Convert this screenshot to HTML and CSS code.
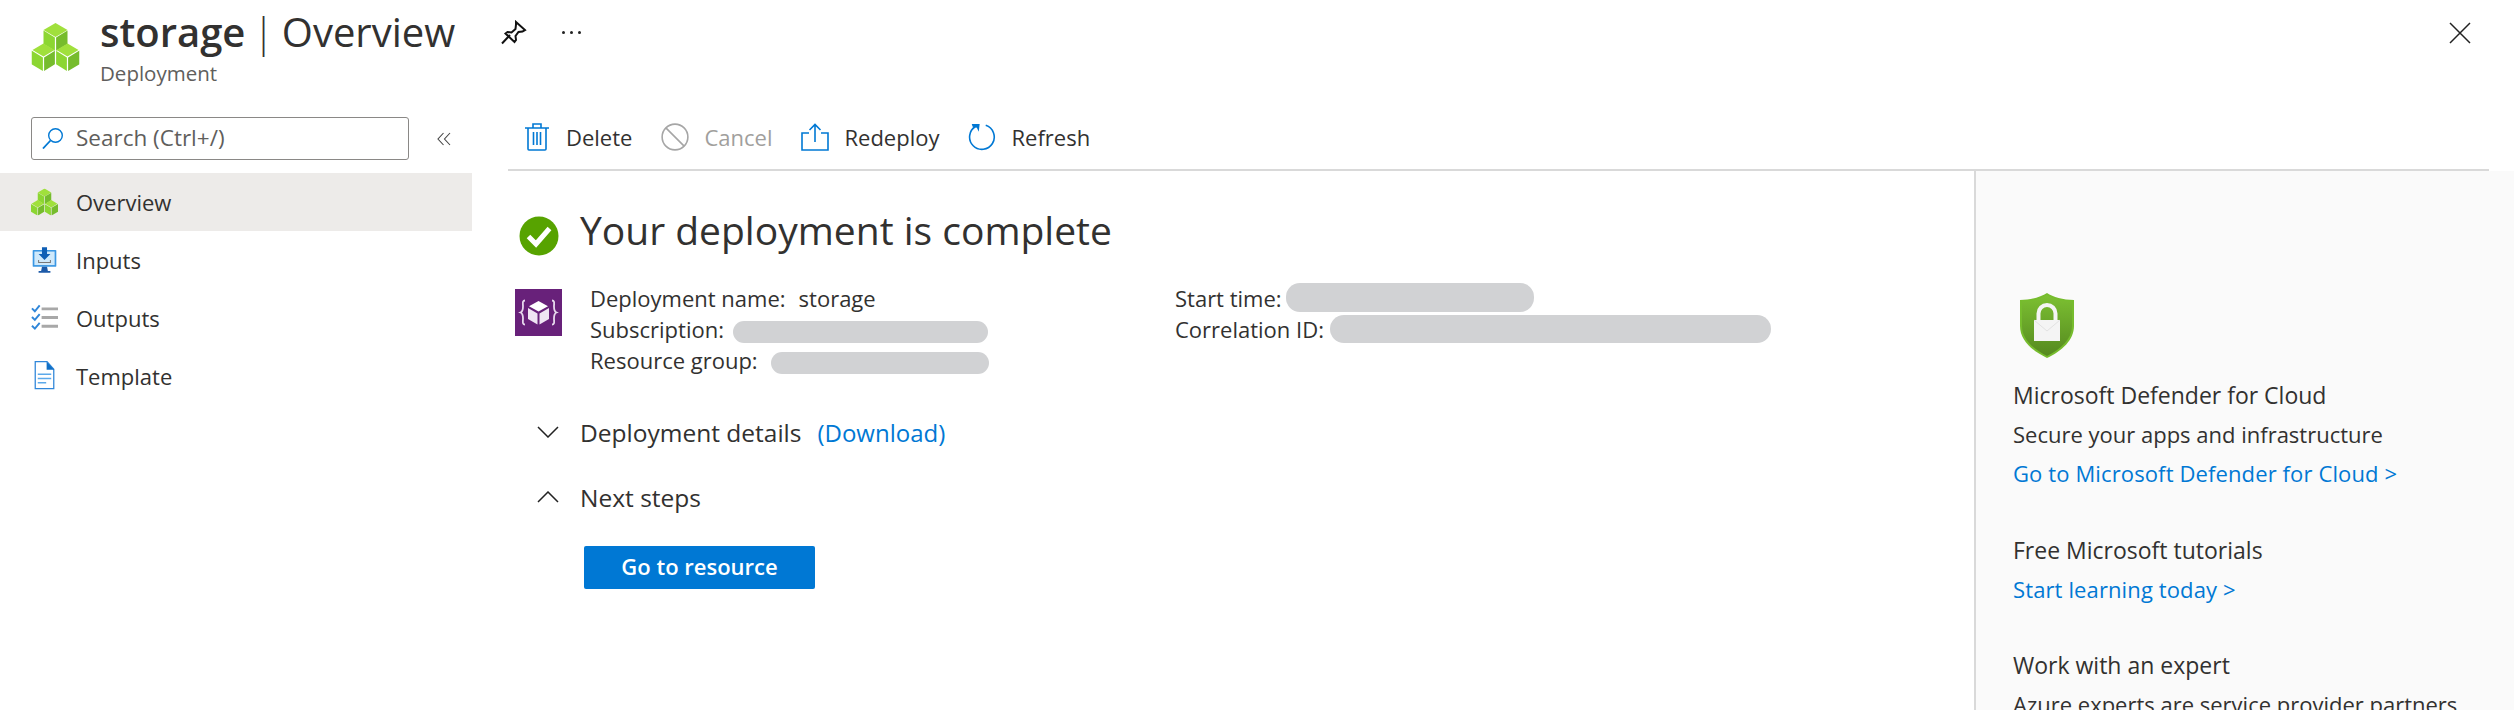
FILE: index.html
```html
<!DOCTYPE html>
<html lang="en">
<head>
<meta charset="utf-8">
<title>storage | Overview</title>
<link rel="stylesheet" href="styles.css">
</head>
<body>
<svg class="defs" width="0" height="0" aria-hidden="true">
  <symbol id="cubes" viewBox="0 0 48 48">
    <path fill="#a0e03c" d="M24 0l12 7-12 7-12-7z"/><path fill="#8cd632" d="M12 7.600l11.400 6.800v13.400L12 21z"/><path fill="#76bc2d" d="M36 7.600l-11.400 6.800v13.400L36 21z"/>
    <path fill="#a0e03c" d="M12 20.600l11 6.400-11 6.600L1 27z"/><path fill="#8cd632" d="M0 27.600l11.400 6.800V48L0 41.200z"/><path fill="#76bc2d" d="M23.400 27.800L12.600 34.400V48l10.800-6.800z"/>
    <path fill="#a0e03c" d="M36 20.600l11 6.400-11 6.600-11-6.600z"/><path fill="#8cd632" d="M24.600 27.800l10.800 6.600V48l-10.800-6.800z"/><path fill="#76bc2d" d="M48 27.600l-11.400 6.800V48L48 41.200z"/>
  </symbol>
</svg>

<header class="page-head">
  <svg class="head-logo" viewBox="0 0 48 48"><use href="#cubes"/></svg>
  <div class="head-titles">
    <h1 class="title"><span class="title-name">storage</span> <span class="title-sep">|</span> Overview</h1>
    <div class="subtitle">Deployment</div>
  </div>
  <svg class="pin" viewBox="0 0 26 26"><path fill="none" stroke="#111" stroke-width="2" d="M15 2l9 8-2.500 1.500-4 .5-3 4 .5 4-1.500 2-9-8.500 2-1.500 4 .5 4-3.500.5-4.500zM9 15l-8 8.500"/></svg>
  <div class="more"><i></i><i></i><i></i></div>
  <svg class="close" viewBox="0 0 22 22"><path fill="none" stroke="#222" stroke-width="1.500" d="M1 1l20 20M21 1L1 21"/></svg>
</header>

<div class="body-row">
  <nav class="sidebar">
    <div class="search-row">
      <div class="search">
        <svg class="search-icon" viewBox="0 0 21 21"><circle cx="13.500" cy="7.500" r="6.800" fill="none" stroke="#0078d4" stroke-width="1.400"/><path stroke="#0078d4" stroke-width="1.800" d="M8.500 12.500L1 20.500"/></svg>
        <span class="search-text">Search (Ctrl+/)</span>
      </div>
      <svg class="collapse" viewBox="0 0 14 14"><path fill="none" stroke="#444" stroke-width="1.100" d="M6.500 1L1 7l5.500 6M13 1L7.500 7l5.500 6"/></svg>
    </div>
    <a class="nav-item active"><svg class="nav-icon" viewBox="0 0 48 48"><use href="#cubes"/></svg>Overview</a>
    <a class="nav-item">
      <svg class="nav-icon" viewBox="-2 -1 32 32"><path fill="#3b97e3" d="M1 3h26a1 1 0 0 1 1 1v18a1 1 0 0 1-1 1H1a1 1 0 0 1-1-1V4a1 1 0 0 1 1-1z"/><rect x="2" y="5" width="24" height="16" fill="#cfe9fb"/><path fill="#0f5fb5" d="M11 0h6v8h4l-7 7-7-7h4z"/><path fill="none" stroke="#777" stroke-width="1.200" d="M7 15v3h14v-3"/><path fill="#1d5aa8" d="M11 23h6l1 5h3v2H7v-2h3z"/></svg>
      Inputs
    </a>
    <a class="nav-item">
      <svg class="nav-icon" viewBox="0 0 28 28"><path fill="none" stroke="#2f86d9" stroke-width="2" d="M1 4l3 3 5-6M1 13l3 3 5-6M1 22l3 3 5-6"/><path fill="#a8a8a8" d="M11 3h17v3H11zM11 12h17v3H11zM11 21h17v3H11z"/></svg>
      Outputs
    </a>
    <a class="nav-item">
      <svg class="nav-icon" viewBox="-2 -1 32 38"><path fill="#fff" stroke="#2f86d9" stroke-width="1.500" d="M3 1h14l8 9v23H3z"/><path fill="#0f6fc6" d="M16.500 1l9 9.500h-9z"/><path stroke="#5ca9ea" stroke-width="1.800" d="M6 16h16M6 21h16M6 26h10"/></svg>
      Template
    </a>
  </nav>

  <main class="content">
    <div class="toolbar">
      <button class="tool">
        <svg class="tool-icon del" viewBox="0 0 24 28"><path fill="none" stroke="#0078d4" stroke-width="1.600" d="M0 5h24M8 5V1h8v4M3 5v21a1 1 0 0 0 1 1h16a1 1 0 0 0 1-1V5M8.500 9v13M12 9v13M15.500 9v13"/></svg>
        Delete
      </button>
      <button class="tool disabled">
        <svg class="tool-icon" viewBox="0 0 30 30"><circle cx="15" cy="15" r="13.800" fill="none" stroke="#a6a6a6" stroke-width="1.700"/><path stroke="#a6a6a6" stroke-width="1.700" d="M5.200 5.200l19.600 19.600"/></svg>
        Cancel
      </button>
      <button class="tool">
        <svg class="tool-icon" viewBox="0 0 28 28"><path fill="none" stroke="#0078d4" stroke-width="1.600" d="M8 10H1v17h26V10h-7M14 19V2M8.500 7L14 1.500 19.500 7"/></svg>
        Redeploy
      </button>
      <button class="tool">
        <svg class="tool-icon" viewBox="0 0 30 30"><path fill="none" stroke="#0078d4" stroke-width="1.700" d="M19 2.500a13.200 13.200 0 1 1-11 1.300"/><path fill="#0078d4" d="M4 1h8.500l-1 8.500L9.500 5 5 4z"/></svg>
        Refresh
      </button>
    </div>

    <div class="columns">
      <section class="main-col">
        <div class="status">
          <svg class="check" viewBox="0 0 40 40"><circle cx="20" cy="20" r="19.500" fill="#57a300"/><path fill="none" stroke="#fff" stroke-width="5" d="M9.500 20.500l7.500 7.500 13.500-15.500"/></svg>
          <h2 class="status-title">Your deployment is complete</h2>
        </div>

        <div class="facts">
          <svg class="facts-icon" viewBox="0 0 47 47"><rect width="47" height="47" fill="#68217a"/><path fill="#fff" d="M23.500 12l9.500 5.200-9.500 5.300-9.500-5.300z"/><path fill="#efe4f3" d="M13 19l9.500 5.400v11L13 30zM34 19l-9.500 5.400v11L34 30z"/><path fill="none" stroke="#e6d8ec" stroke-width="1.800" d="M10 11.500c-3 0-2 3-2 6s0 5-2.500 6c2.500 1 2.500 3 2.500 6s-1 6 2 6M37 11.500c3 0 2 3 2 6s0 5 2.500 6c-2.500 1-2.500 3-2.500 6s1 6-2 6"/></svg>
          <div class="facts-col left-facts">
            <div class="fact">Deployment name:<span class="value">storage</span></div>
            <div class="fact">Subscription:<span class="mask mask-sub"></span></div>
            <div class="fact">Resource group:<span class="mask mask-rg"></span></div>
          </div>
          <div class="facts-col">
            <div class="fact">Start time:<span class="mask mask-time"></span></div>
            <div class="fact">Correlation ID:<span class="mask mask-corr"></span></div>
          </div>
        </div>

        <div class="disclosure details">
          <svg class="chev" viewBox="0 0 22 12"><path fill="none" stroke="#222" stroke-width="1.500" d="M1 1l10 10L21 1"/></svg>
          <span class="disc-title">Deployment details</span>
          <a class="link download">(Download)</a>
        </div>
        <div class="disclosure next">
          <svg class="chev" viewBox="0 0 22 12"><path fill="none" stroke="#222" stroke-width="1.500" d="M1 11L11 1l10 10"/></svg>
          <span class="disc-title">Next steps</span>
        </div>
        <button class="primary">Go to resource</button>
      </section>

      <aside class="promo">
        <svg class="shield" viewBox="0 0 54 65">
          <defs><linearGradient id="sg" x1="0" y1="0" x2="0" y2="1"><stop offset="0" stop-color="#7cc032"/><stop offset="1" stop-color="#55891f"/></linearGradient></defs>
          <path fill="#76bc2d" d="M27 0c6 4 16 7 27 7v26c0 14-12 25-27 32C12 58 0 47 0 33V7c11 0 21-3 27-7z"/>
          <path fill="url(#sg)" d="M27 2c6 4 15 6.500 25 6.500V33c0 13-11 23-25 30C13 56 2 46 2 33V8.500C12 8.500 21 6 27 2z"/>
          <path fill="none" stroke="#f4f4f4" stroke-width="4" d="M18.500 28v-7.500a8.500 8.500 0 0 1 17 0V28"/>
          <rect x="14" y="27" width="26" height="21" fill="#f4f4f4"/><path fill="none" stroke="#e2e2e2" d="M14 27l13 11 13-11"/>
        </svg>
        <h3 class="promo-title first">Microsoft Defender for Cloud</h3>
        <p class="promo-text">Secure your apps and infrastructure</p>
        <a class="link promo-link">Go to Microsoft Defender for Cloud &gt;</a>
        <h3 class="promo-title second">Free Microsoft tutorials</h3>
        <a class="link promo-link">Start learning today &gt;</a>
        <h3 class="promo-title third">Work with an expert</h3>
        <p class="promo-text">Azure experts are service provider partners</p>
      </aside>
    </div>
  </main>
</div>
</body>
</html>
```

FILE: styles.css
```css
* { box-sizing: border-box; }
html, body { margin: 0; height: 710px; overflow: hidden; background: #fff; }
body { font-family: "Open Sans", "Noto Sans", sans-serif; font-size: 22px; color: #323130; }
.defs { position: absolute; }
h1, h2, h3, p { margin: 0; font-weight: 400; }
a { color: inherit; text-decoration: none; }

.page-head { display: flex; align-items: flex-start; height: 104px; padding-left: 31px; position: relative; }
.head-logo { width: 49px; height: 48px; margin-top: 23px; flex: none; }
.head-titles { margin-left: 20px; width: 401px; }
.title { font-size: 40px; line-height: 50px; margin-top: 7px; white-space: nowrap; font-weight: 400; word-spacing: -3px; }
.title-name { font-weight: 600; }
.title-sep { font-weight: 300; }
.subtitle { font-size: 20.500px; line-height: 26px; color: #605e5c; margin-top: 3px; }
.pin { width: 26px; height: 26px; margin-top: 20px; flex: none; }
.more { display: flex; gap: 5px; margin: 31px 0 0 35px; }
.more i { width: 3px; height: 3px; background: #222; border-radius: 50%; }
.close { position: absolute; left: 2449px; top: 22px; width: 22px; height: 22px; }

.body-row { display: flex; height: 606px; }
.sidebar { width: 472px; flex: none; padding-top: 13px; }
.search-row { display: flex; align-items: center; padding-left: 31px; margin-bottom: 13px; }
.search { width: 378px; height: 43px; border: 1px solid #8a8886; border-radius: 3px; display: flex; align-items: center; padding-left: 10px; color: #605e5c; }
.search-icon { width: 21px; height: 21px; margin-right: 13px; flex: none; }
.search-text { font-size: 22.500px; margin-top: -2px; }
.collapse { width: 14px; height: 14px; margin-left: 28px; }
.nav-item { display: flex; align-items: center; height: 58px; padding-left: 31px; }
.nav-item.active { background: #edebe9; }
.nav-icon { width: 27px; height: 32px; margin-right: 18px; flex: none; }

.content { flex: 1; margin-left: 36px; min-width: 0; }
.toolbar { display: flex; width: 1981px; height: 67px; border-bottom: 2px solid #d9d9d9; padding: 18px 0 0 17px; align-items: flex-start; }
.tool { display: flex; align-items: center; height: 30px; background: none; border: 0; padding: 0; font: inherit; color: #323130; margin-right: 29px; white-space: nowrap; }
.tool.disabled { color: #a19f9d; }
.tool-icon { width: 28px; height: 28px; margin-right: 15px; flex: none; }
.tool-icon.del { width: 24px; margin-right: 17px; }

.columns { display: flex; height: 539px; }
.main-col { width: 1466px; flex: none; padding: 44px 0 0 7px; }
.status { display: flex; align-items: center; height: 41px; padding-left: 4px; }
.check { width: 40px; height: 40px; flex: none; }
.status-title { font-size: 39px; line-height: 41px; margin-left: 21px; margin-top: -13px; white-space: nowrap; }

.facts { display: flex; margin-top: 33px; }
.facts-icon { width: 47px; height: 47px; flex: none; }
.facts-col { padding-left: 28px; margin-top: -7px; }
.left-facts { width: 585px; }
.fact { display: flex; align-items: center; height: 31px; white-space: nowrap; }
.value { margin-left: 13px; }
.mask { display: block; background: #d1d2d4; }
.mask-sub { width: 255px; height: 22px; border-radius: 11px; margin: 6px 0 0 9px; }
.mask-rg { width: 218px; height: 22px; border-radius: 11px; margin: 6px 0 0 13px; }
.mask-time { width: 248px; height: 29px; border-radius: 14px; margin-left: 4px; }
.mask-corr { width: 441px; height: 28px; border-radius: 14px; margin-left: 6px; }

.disclosure { display: flex; align-items: center; height: 30px; padding-left: 22px; }
.details { margin-top: 42px; }
.next { margin-top: 35px; }
.chev { width: 22px; height: 12px; flex: none; margin-right: 21px; }
.disc-title { font-size: 24.500px; font-weight: 500; white-space: nowrap; }
.link { color: #0078d4; }
.download { font-size: 24px; margin-left: 16px; }
.primary { display: block; width: 231px; height: 43px; margin: 34px 0 0 69px; padding: 0 0 3px; background: #0078d4; color: #fff; border: 0; border-radius: 2px; font: 600 22px "Open Sans", "Noto Sans", sans-serif; }

.promo { flex: 1; border-left: 2px solid #d9d9d9; background: #fafafa; padding: 122px 0 0 37px; overflow: hidden; }
.shield { display: block; width: 54px; height: 65px; margin-left: 7px; }
.promo-title { font-size: 23px; line-height: 28px; font-weight: 500; white-space: nowrap; }
.promo-title.first { margin-top: 23px; }
.promo-title.second { margin-top: 49px; }
.promo-title.third { margin-top: 48px; }
.promo-text { line-height: 28px; margin-top: 11px; white-space: nowrap; }
.promo-link { display: block; line-height: 28px; margin-top: 11px; white-space: nowrap; letter-spacing: 0.120px; }
```
